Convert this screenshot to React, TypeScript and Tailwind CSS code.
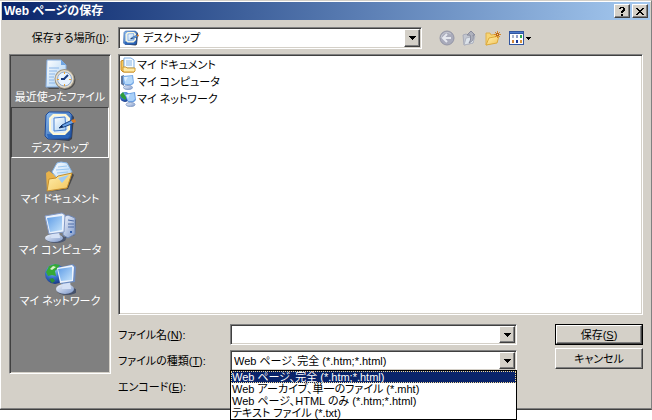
import React, { useState } from "react";

const raised =
  "border border-t-white border-l-white border-r-[#404040] border-b-[#404040] shadow-[inset_-1px_-1px_0_#808080]";
const sunken =
  "border border-t-[#808080] border-l-[#808080] border-r-white border-b-white shadow-[inset_1px_1px_0_#404040,inset_-1px_-1px_0_#d4d0c8]";

function Gradients() {
  return (
    <svg width="0" height="0" className="absolute" aria-hidden="true">
      <defs>
        <linearGradient id="paper" x1="0" y1="0" x2="1" y2="1">
          <stop offset="0" stopColor="#ffffff" />
          <stop offset="1" stopColor="#a4cdf2" />
        </linearGradient>
        <linearGradient id="screen" x1="0" y1="0" x2="1" y2="1">
          <stop offset="0" stopColor="#5d9be6" />
          <stop offset="1" stopColor="#c3e2fb" />
        </linearGradient>
        <linearGradient id="shell" x1="0" y1="0" x2="1" y2="1">
          <stop offset="0" stopColor="#f4f8ff" />
          <stop offset="1" stopColor="#7b96c8" />
        </linearGradient>
        <linearGradient id="blotter" x1="0" y1="0" x2="1" y2="1">
          <stop offset="0" stopColor="#8fc0f4" />
          <stop offset="1" stopColor="#1b4f9f" />
        </linearGradient>
        <linearGradient id="folder" x1="0" y1="0" x2="1" y2="1">
          <stop offset="0" stopColor="#fff0ae" />
          <stop offset="1" stopColor="#f2c35a" />
        </linearGradient>
        <radialGradient id="globe" cx="0.4" cy="0.3" r="0.75">
          <stop offset="0" stopColor="#a9d5fb" />
          <stop offset="0.5" stopColor="#3a74cf" />
          <stop offset="1" stopColor="#12307c" />
        </radialGradient>
      </defs>
    </svg>
  );
}

type IconProps = { size: number };

function RecentIcon({ size }: IconProps) {
  return (
    <svg width={size} height={size} viewBox="0 0 32 32" aria-hidden="true">
      <path d="M3 28 L5 30 H15 L14 27 Z" fill="#4d4d4d" />
      <path d="M3 1 H17 L22 6 V28 H2 Z" fill="url(#paper)" stroke="#86aee0" />
      <path d="M17 1 V6 H22 Z" fill="#6fa5e2" />
      <path d="M5 9 H15 M5 12 H13 M5 15 H11 M5 18 H10 M5 21 H10 M5 24 H11" stroke="#8cb6e8" />
      <circle cx="21.5" cy="21" r="10" fill="#505050" />
      <circle cx="20.5" cy="20" r="10" fill="#9c9484" />
      <circle cx="20.5" cy="20" r="9" fill="#e4dccb" />
      <circle cx="20.5" cy="20" r="7" fill="#e9f4ff" stroke="#8fa9cc" />
      <path d="M20 20 L24 16" stroke="#1b3c80" strokeWidth="2" />
      <path d="M17 20 H21" stroke="#1b3c80" strokeWidth="2" />
      <path d="M20 13 h1 v2 h-1 Z M20 25 h1 v2 h-1 Z M13 20 h2 v1 h-2 Z M25 20 h2 v1 h-2 Z" fill="#efa12c" />
    </svg>
  );
}

function DesktopIcon({ size }: IconProps) {
  return (
    <svg width={size} height={size} viewBox="0 0 32 32" aria-hidden="true">
      <path d="M6 3 L27 4 L30 7 L28 29 L25 31 L4 29 Z" fill="#39414f" />
      <path d="M5 2 L25 2 L28 5 L27 27 L24 29 L4 29 L1 26 L2 5 Z" fill="url(#blotter)" stroke="#1d4b9b" />
      <path d="M3 24 L26 25 L24 28 L4 28 Z" fill="#2c68bd" />
      <path d="M9 4 H22 L26 8 V20 L21 25 H9 L5 21 V8 Z" fill="#fff8d5" />
      <path d="M10 6 H21 L24 9 V19 L20 23 H10 L7 20 V9 Z" fill="#dcecfc" />
      <path d="M10 8 L21 7 L22 20 L10 21 Z" fill="url(#paper)" stroke="#4b83d0" />
      <path d="M15 18 L18 15 L28 10 L30 13 L20 17 Z" fill="#6aa3e8" stroke="#17407f" />
      <path d="M27 10 L31 9 L32 12 L29 13 Z" fill="#d77b27" />
      <path d="M15 18 L18 15 L19 17 Z" fill="#10264f" />
    </svg>
  );
}

function DocumentsIcon({ size }: IconProps) {
  return (
    <svg width={size} height={size} viewBox="0 0 32 32" aria-hidden="true">
      <path d="M4 31 L24 28 L30 14 L28 12 L23 27 Z" fill="#4a4a4a" />
      <path d="M2 12 L5 10 L9 13 L25 10 L27 13 L22 27 L3 30 Z" fill="#e8b24a" />
      <path d="M8 11 L13 2 L17 1 L23 2 L28 11 L18 23 Z" fill="url(#paper)" stroke="#86b6e8" />
      <path d="M14 6 L23 5 M12 9 L25 8 M13 12 L24 11" stroke="#9ac8f2" />
      <path d="M3 30 L5 18 L12 17 L14 15 L28 12 L23 27 Z" fill="url(#folder)" stroke="#c58e2c" />
      <path d="M14 17 L25 14 L18 22 Z" fill="#9fcbf3" />
    </svg>
  );
}

function ComputerIcon({ size }: IconProps) {
  return (
    <svg width={size} height={size} viewBox="0 0 32 32" aria-hidden="true">
      <path d="M20 27 L31 23 L32 8 L29 6 Z" fill="#4b5568" />
      <path d="M19 5 L24 3 L31 6 V22 L24 26 L19 23 Z" fill="url(#shell)" stroke="#6f87b4" />
      <path d="M24 8 L30 9 M24 12 L30 12 M24 15 L30 15" stroke="#4d6da8" />
      <path d="M26 19 h2 v2 h-2 Z" fill="#2e5eae" />
      <ellipse cx="12" cy="27" rx="10" ry="4" fill="#4d5870" />
      <ellipse cx="10" cy="26" rx="9" ry="4" fill="url(#shell)" />
      <path d="M8 19 H15 L16 26 H7 Z" fill="#d5e1f5" />
      <path d="M1 4 L18 1 L21 3 L20 20 L5 22 Z" fill="#e9f1fc" stroke="#8198c4" />
      <path d="M3 6 L18 4 L18 18 L6 20 Z" fill="url(#screen)" />
    </svg>
  );
}

function NetworkIcon({ size }: IconProps) {
  return (
    <svg width={size} height={size} viewBox="0 0 32 32" aria-hidden="true">
      <circle cx="11" cy="11" r="10" fill="url(#globe)" />
      <path d="M5 3 L11 1 L16 2 L13 6 L11 8 L12 13 L8 12 L4 13 L2 9 Z" fill="#35a935" />
      <path d="M9 3 L12 4 L8 7 L6 6 Z" fill="#d9f3c8" />
      <path d="M5 16 L9 15 L11 18 L8 20 Z" fill="#2b8f37" />
      <ellipse cx="23" cy="28" rx="10" ry="4" fill="#46526b" />
      <ellipse cx="21" cy="26" rx="9" ry="5" fill="url(#shell)" />
      <path d="M19 18 H26 L27 26 H18 Z" fill="#d5e1f5" />
      <path d="M13 5 L29 1 L32 4 L31 19 L17 21 Z" fill="#6d8cc0" />
      <path d="M13 5 L28 2 L30 4 L29 18 L16 20 Z" fill="#edf4fd" />
      <path d="M14 6 L28 4 L28 17 L17 18 Z" fill="url(#screen)" />
    </svg>
  );
}

function FolderPapersIcon() {
  return (
    <svg width="16" height="16" viewBox="0 0 16 16" aria-hidden="true">
      <path d="M1 4 L4 3 V12 H14 V15 H3 L1 13 Z" fill="#f6c95c" stroke="#c98a22" />
      <path d="M4 1 H11 L14 3 V11 H4 Z" fill="#f8fcff" stroke="#7fb0e6" />
      <path d="M6 4 H12 M6 6 H12 M6 8 H12" stroke="#86b5e8" />
      <path d="M3 10 H6 L7 11 H15 V14 L14 15 H4 L3 14 Z" fill="#ffeaa6" stroke="#d09a33" />
    </svg>
  );
}

function SmallComputerIcon() {
  return (
    <svg width="16" height="16" viewBox="0 0 16 16" aria-hidden="true">
      <path d="M1 2 L4 1 V12 L1 10 Z" fill="#5f789f" />
      <path d="M7 10 H11 V13 H7 Z" fill="#b9cdea" />
      <ellipse cx="8" cy="13.5" rx="4.5" ry="2" fill="url(#shell)" stroke="#8ba3cb" />
      <path d="M3 2 L13 1 L14 9 L12 11 H5 L3 9 Z" fill="#78aae6" />
      <path d="M4 3 L12 2 L13 8 L11 10 H5 Z" fill="#b4d8fa" />
      <path d="M4 3 L8 3 L5 8 Z" fill="#dff0ff" />
    </svg>
  );
}

function SmallNetworkIcon() {
  return (
    <svg width="16" height="16" viewBox="0 0 16 16" aria-hidden="true">
      <circle cx="5" cy="6" r="5" fill="url(#globe)" />
      <path d="M0 4 L3 1 L6 6 L6 9 L2 7 Z" fill="#2f9d3a" />
      <path d="M9 11 H13 V13 H9 Z" fill="#b9cdea" />
      <ellipse cx="10.5" cy="13.5" rx="4.5" ry="2" fill="url(#shell)" stroke="#8ba3cb" />
      <path d="M5 3 L15 1 L16 9 L14 11 H8 Z" fill="#6d9fe0" />
      <path d="M6 4 L14 2 L15 8 L13 10 H8 Z" fill="#a9d0f8" />
      <path d="M6 4 L10 3 L8 8 Z" fill="#dcedff" />
    </svg>
  );
}

function BackIcon() {
  return (
    <svg width="16" height="16" viewBox="0 0 16 16" aria-hidden="true">
      <circle cx="8" cy="8" r="7" fill="#a9abbb" stroke="#9496a6" />
      <path d="M2 8 A6 6 0 0 1 12 4" stroke="#c5c7d2" fill="none" />
      <path d="M8 4 L4 8 L8 12 M4 8 H12" stroke="#e6e8ef" strokeWidth="2" fill="none" />
    </svg>
  );
}

function UpIcon() {
  return (
    <svg width="16" height="16" viewBox="0 0 16 16" aria-hidden="true">
      <path d="M1 5 L4 4 L6 5 H12 L11 13 L2 15 Z" fill="#c3c7d0" stroke="#a8abb8" />
      <path d="M2 15 L4 8 L13 6 L11 13 Z" fill="#dde3ea" stroke="#b0b4c0" />
      <path d="M9 1 L13 5 H11 C12 9 11 11 7 13 C9 10 9 8 8 5 H5 Z" fill="#aeb1bd" stroke="#888b9c" />
    </svg>
  );
}

function NewFolderIcon() {
  return (
    <svg width="16" height="16" viewBox="0 0 16 16" aria-hidden="true">
      <path d="M1 3 L5 3 L6 5 L12 4 V12 L1 15 Z" fill="#f7d574" stroke="#e0b04a" />
      <path d="M1 15 L4 8 L14 6 L12 13 Z" fill="url(#folder)" stroke="#dcaa3c" />
      <path d="M12.5 1 V8 M9 4.5 H16 M10 2 L15 7 M15 2 L10 7" stroke="#d98a2b" />
      <path d="M11 3 h3 v3 h-3 Z" fill="#b8641a" />
      <path d="M12 4 h1 v1 h-1 Z" fill="#ffe28a" />
    </svg>
  );
}

function ViewIcon() {
  return (
    <svg width="24" height="16" viewBox="0 0 24 16" shapeRendering="crispEdges" aria-hidden="true">
      <path d="M1 1 H16 V15 H1 Z" fill="#31559f" />
      <path d="M2 2 H15 V3 H2 Z" fill="#4b78cc" />
      <path d="M2 4 H15 V14 H2 Z" fill="#fdfdff" />
      <path d="M4 5 h2 v3 h-2 Z" fill="#a9b4cc" />
      <path d="M8 5 h2 v3 h-2 Z" fill="#8f9cc8" />
      <path d="M12 5 h2 v3 h-2 Z" fill="#2fa84c" />
      <path d="M4 10 h2 v3 h-2 Z" fill="#d0863c" />
      <path d="M8 10 h2 v3 h-2 Z" fill="#1c3a94" />
      <path d="M12 10 h2 v3 h-2 Z" fill="#d9943a" />
      <path d="M18 7 h5 v1 h-1 v1 h-1 v1 h-1 v-1 h-1 v-1 h-1 Z" fill="#000" />
    </svg>
  );
}

function ComboArrow() {
  return (
    <span
      className={`pointer-events-none absolute top-[2px] right-[2px] bottom-[2px] flex w-4 items-center justify-center bg-[#d4d0c8] ${raised}`}
    >
      <svg width="7" height="4" viewBox="0 0 7 4" shapeRendering="crispEdges" aria-hidden="true">
        <path d="M0 0 h7 v1 h-1 v1 h-1 v1 h-1 v1 h-1 v-1 h-1 v-1 h-1 v-1 h-1 Z" fill="#000" />
      </svg>
    </span>
  );
}

const places = [
  { name: "最近使ったファイル", Icon: RecentIcon },
  { name: "デスクトップ", Icon: DesktopIcon },
  { name: "マイ ドキュメント", Icon: DocumentsIcon },
  { name: "マイ コンピュータ", Icon: ComputerIcon },
  { name: "マイ ネットワーク", Icon: NetworkIcon },
];

const entries = [
  { name: "マイ ドキュメント", Icon: FolderPapersIcon },
  { name: "マイ コンピュータ", Icon: SmallComputerIcon },
  { name: "マイ ネットワーク", Icon: SmallNetworkIcon },
];

const fileTypes = [
  "Web ページ、完全 (*.htm;*.html)",
  "Web アーカイブ、単一のファイル (*.mht)",
  "Web ページ、HTML のみ (*.htm;*.html)",
  "テキスト ファイル (*.txt)",
];

const tools = [
  { name: "back", Icon: BackIcon },
  { name: "up", Icon: UpIcon },
  { name: "new folder", Icon: NewFolderIcon },
  { name: "view", Icon: ViewIcon },
];

export default function App() {
  const [place, setPlace] = useState(1);
  const [type, setType] = useState(0);

  return (
    <main className="min-h-screen bg-white font-['Liberation_Sans','Noto_Sans_CJK_JP',sans-serif] text-[11px] leading-[12px] text-black [font-feature-settings:'palt']">
      <Gradients />
      <div className="border-t border-r border-b border-t-[#d4d0c8] border-r-[#808080] border-b-[#404040]">
        <div className="border-t border-b border-l border-t-white border-b-[#808080] border-l-white bg-[#d4d0c8]">
          <header className="mx-px flex h-[18px] items-center gap-[2px] bg-linear-to-r from-[#0a246a] to-[#a6caf0] pr-[2px] pl-[2px]">
            <h1 className="flex-1 text-[12px] leading-[18px] font-bold text-white">Web ページの保存</h1>
            <button
              type="button"
              aria-label="?"
              className={`flex h-[14px] w-4 items-center justify-center bg-[#d4d0c8] ${raised}`}
            >
              <svg width="6" height="9" viewBox="0 0 6 9" shapeRendering="crispEdges" aria-hidden="true">
                <path d="M1 0 h4 v1 h1 v3 h-1 v1 h-1 v1 h-2 v-2 h1 v-1 h1 v-2 h-2 v1 h-2 v-1 h1 Z M2 7 h2 v2 h-2 Z" fill="#000" />
              </svg>
            </button>
            <button
              type="button"
              aria-label="×"
              className={`flex h-[14px] w-4 items-center justify-center bg-[#d4d0c8] ${raised}`}
            >
              <svg width="8" height="7" viewBox="0 0 8 7" shapeRendering="crispEdges" aria-hidden="true">
                <path
                  d="M0 0 h2 v1 h1 v1 h2 v-1 h1 v-1 h2 v1 h-1 v1 h-1 v1 h-1 v1 h1 v1 h1 v1 h1 v1 h-2 v-1 h-1 v-1 h-2 v1 h-1 v1 h-2 v-1 h1 v-1 h1 v-1 h1 v-1 h-1 v-1 h-1 v-1 h-1 Z"
                  fill="#000"
                />
              </svg>
            </button>
          </header>

          <div className="flex flex-col gap-[5px] pt-[7px] pr-2 pb-[11px] pl-2">
            <div className="flex items-center gap-[7px]">
              <label htmlFor="place" className="w-[102px] pr-[2px] text-right">
                保存する場所(<u>I</u>):
              </label>
              <div className="relative flex-1">
                <select
                  id="place"
                  value={place}
                  onChange={(e) => setPlace(Number(e.target.value))}
                  className={`block h-[22px] w-full appearance-none bg-white pl-6 outline-none ${sunken}`}
                >
                  {places.map((p, i) => (
                    <option key={p.name} value={i}>
                      {p.name}
                    </option>
                  ))}
                </select>
                <span className="pointer-events-none absolute top-[3px] left-[5px]">
                  <DesktopIcon size={16} />
                </span>
                <ComboArrow />
              </div>
              <div className="flex w-[214px] gap-[7px] pl-[10px]">
                {tools.map(({ name, Icon }) => (
                  <button key={name} type="button" aria-label={name}>
                    <Icon />
                  </button>
                ))}
              </div>
            </div>

            <div className="flex items-start gap-[7px]">
              <nav className={`h-[320px] w-[102px] bg-[#808080] p-px ${sunken}`}>
                {places.map(({ name, Icon }, i) => (
                  <button
                    key={name}
                    type="button"
                    onClick={() => setPlace(i)}
                    className={`flex h-[51px] w-full flex-col items-center border pt-[2px] whitespace-nowrap text-white ${
                      i === place
                        ? "border-t-[#404040] border-r-white border-b-white border-l-[#404040]"
                        : "border-transparent"
                    }`}
                  >
                    <Icon size={32} />
                    <span>{name}</span>
                  </button>
                ))}
              </nav>

              <div className="flex flex-1 flex-col gap-[9px]">
                <ul className={`h-[261px] bg-white px-px pt-px ${sunken}`}>
                  {entries.map(({ name, Icon }) => (
                    <li key={name} className="flex h-[17px] items-center gap-px">
                      <Icon />
                      <span>{name}</span>
                    </li>
                  ))}
                </ul>

                <form className="flex items-start gap-[38px]" onSubmit={(e) => e.preventDefault()}>
                  <div className="grid flex-1 grid-cols-[112px_1fr] items-center gap-y-[5px]">
                    <label htmlFor="filename">
                      ファイル名(<u>N</u>):
                    </label>
                    <div className="relative">
                      <input
                        id="filename"
                        type="text"
                        className={`block h-[21px] w-full bg-white pr-5 pl-[3px] outline-none ${sunken}`}
                      />
                      <ComboArrow />
                    </div>

                    <label htmlFor="filetype">
                      ファイルの種類(<u>T</u>):
                    </label>
                    <div className="relative">
                      <select
                        id="filetype"
                        value={type}
                        onChange={(e) => setType(Number(e.target.value))}
                        className={`block h-[21px] w-full appearance-none bg-white pl-[3px] outline-none ${sunken}`}
                      >
                        {fileTypes.map((t, i) => (
                          <option key={t} value={i}>
                            {t}
                          </option>
                        ))}
                      </select>
                      <ComboArrow />
                      <ul
                        role="listbox"
                        className="absolute top-[20px] right-0 left-0 z-10 border border-black bg-white whitespace-nowrap"
                      >
                        {fileTypes.map((t, i) => (
                          <li
                            key={t}
                            role="option"
                            aria-selected={i === type}
                            onClick={() => setType(i)}
                            className={`h-3 pl-px ${
                              i === type
                                ? "bg-[#0a246a] text-white outline-1 -outline-offset-1 outline-[#f5db95] outline-dotted"
                                : ""
                            }`}
                          >
                            {t}
                          </li>
                        ))}
                      </ul>
                    </div>

                    <label htmlFor="encoding">
                      エンコード(<u>E</u>):
                    </label>
                    <select id="encoding" className={`h-[21px] w-full appearance-none bg-white ${sunken}`} />
                  </div>

                  <div className="flex w-[88px] flex-col gap-[3px]">
                    <button type="submit" className="h-[21px] border border-black bg-[#d4d0c8]">
                      <span className={`flex h-full items-center justify-center ${raised}`}>
                        保存(<u>S</u>)
                      </span>
                    </button>
                    <button type="button" className={`h-[21px] bg-[#d4d0c8] ${raised}`}>
                      キャンセル
                    </button>
                  </div>
                </form>
              </div>
            </div>
          </div>
        </div>
      </div>
    </main>
  );
}
